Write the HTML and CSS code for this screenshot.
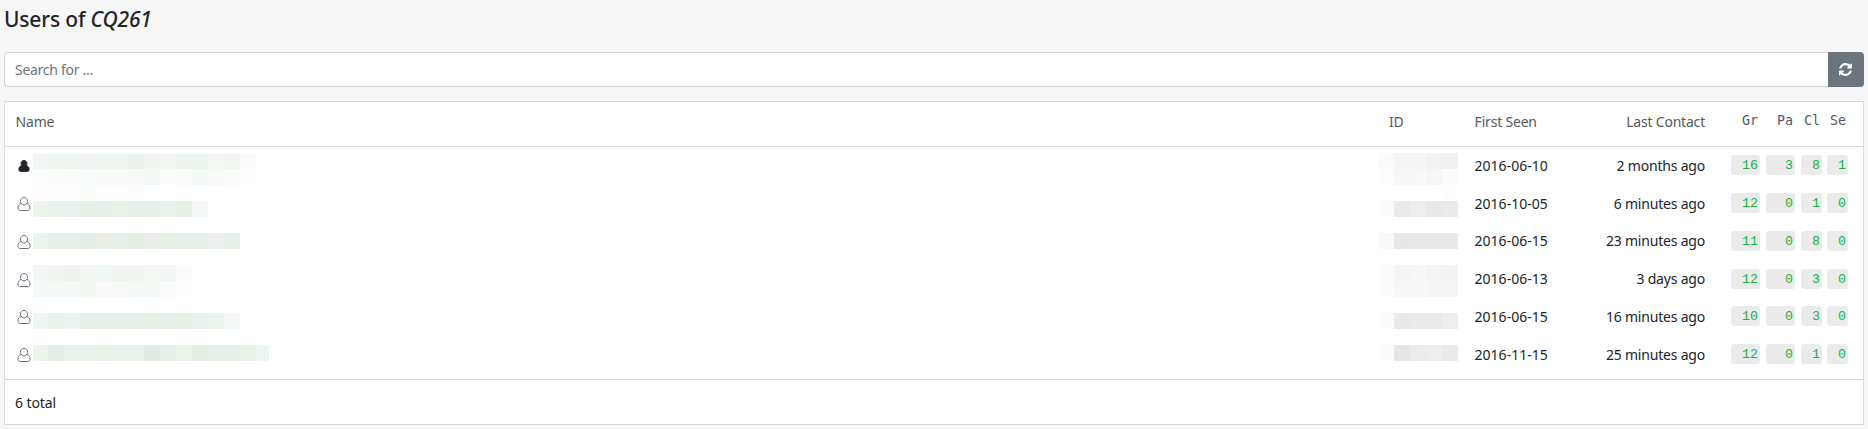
FILE: index.html
```html
<!DOCTYPE html>
<html lang="en">
<head>
<meta charset="utf-8">
<title>Users of CQ261</title>
<link rel="stylesheet" href="styles.css">
</head>
<body>
<svg class="defs" aria-hidden="true">
<symbol id="user" viewBox="0 0 14 16"><path d="M7 1.500C4.800 1.500 3.500 3.100 3.500 5.100C3.500 6.500 4 7.500 4.900 8.100C5.500 8.600 6.200 8.900 7 8.900S8.500 8.600 9.100 8.100C10 7.500 10.500 6.500 10.500 5.100C10.500 3.100 9.200 1.500 7 1.500M4.200 7.600C2 7.800 1 9.600 1 12.200C1 13.600 1.800 14.500 3.100 14.500H10.900C12.200 14.500 13 13.600 13 12.200C13 9.600 12 7.800 9.800 7.600"/></symbol>
</svg>
<h1 class="title">Users of <em>CQ261</em></h1>
<div class="search">
<input class="search-input" type="text" placeholder="Search for ...">
<button class="refresh" aria-label="Refresh"><svg width="13" height="13" viewBox="0 0 1536 1536"><path fill="#fff" d="M1511 928q0 5-1 7-64 268-268 434.500T764 1536q-146 0-282.500-55T238 1324l-129 129q-19 19-45 19t-45-19-19-45V960q0-26 19-45t45-19h448q26 0 45 19t19 45-19 45l-137 137q71 66 161 102t187 36q134 0 250-65t186-179q11-17 53-117 8-23 30-23h192q13 0 22.500 9.500t9.500 22.500zm25-800v448q0 26-19 45t-45 19h-448q-26 0-45-19t-19-45 19-45l138-138Q969 256 768 256q-134 0-250 65T332 500q-11 17-53 117-8 23-30 23H50q-13 0-22.500-9.500T18 608v-7q65-268 270-434.500T768 0q146 0 284 55.500T1297 212l130-129q19-19 45-19t45 19 19 45z"/></svg></button>
</div>
<div class="table">
<div class="row head"><span class="name">Name</span><span class="id">ID</span><span class="first">First Seen</span><span class="last">Last Contact</span><span class="counts"><b>Gr</b><b>Pa</b><b>Cl</b><b>Se</b></span></div>
<div class="body" id="body"></div>
<div class="foot">6 total</div>
</div>
<script src="app.js"></script>
</body>
</html>
```
FILE: styles.css
```css
*{box-sizing:border-box}
body{margin:0;padding:0 4px;background:#f7f7f7;color:#212529;font:14px/21px "Noto Sans",sans-serif}
.defs{display:none}
.title{margin:0;height:52px;padding-top:7px;font-size:21px;line-height:25px;font-weight:500;letter-spacing:-.17px}
.search{display:flex;height:35px;margin-bottom:14px}
.search-input{flex:1;min-width:0;border:1px solid #ced4da;border-right:0;border-radius:4px 0 0 4px;background:#fff;padding:0 10px;font:inherit;letter-spacing:-.28px}
.search-input::placeholder{color:#6c757d;opacity:1}
.refresh{width:36px;padding:0 1px 0 0;border:0;border-radius:0 4px 4px 0;background:#6c757d;display:flex;align-items:center;justify-content:center}
.table{height:324px;border:1px solid #d9dadb;background:#fff}
.row{display:grid;grid-template-columns:1374px 85px 120px 111px 1fr;padding-left:10px;align-items:center}
.head{height:45px;padding-bottom:6px;color:#55595e;border-bottom:1px solid #d9dadb;letter-spacing:-.2px}
.head .name,.first{padding-left:.600px}
.last{text-align:right;letter-spacing:-.2px}
.counts{display:flex;padding-left:26px;font:13.330px/22px "Liberation Mono",monospace;letter-spacing:0}
.counts b{font-weight:400;text-align:right;padding-right:2px;height:20px;border-radius:3px}
.counts b:nth-child(1){width:29px;margin-right:6px}
.counts b:nth-child(2){width:29px;margin-right:6px}
.counts b:nth-child(3){width:21px;margin-right:5px}
.counts b:nth-child(4){width:21px}
.head .counts{font:13.330px/20px "DejaVu Sans Mono",monospace;padding-bottom:1px}
.body{display:grid;grid-template-columns:1fr;grid-template-rows:repeat(6,37.800px);height:233px;border-bottom:1px solid #d9dadb}
.body .row{grid-column:1;padding-bottom:1.400px}
.body .counts b{background:#ebebeb;color:#1bb244}
.mosaic{grid-column:1;grid-row:1/7;display:block}
.user{display:block;width:14px;height:16px;margin:2px 0 0 2px;fill:none;stroke:#6c757d}
.user.self{width:12px;height:14px;margin-left:3px;fill:#212529;stroke:#212529}
.foot{height:45px;padding:12px 10px 0;letter-spacing:-.1px}
```
FILE: app.js
```javascript
const users = [
  ["2016-06-10", "2 months ago", [16, 3, 8, 1]],
  ["2016-10-05", "6 minutes ago", [12, 0, 1, 0]],
  ["2016-06-15", "23 minutes ago", [11, 0, 8, 0]],
  ["2016-06-13", "3 days ago", [12, 0, 3, 0]],
  ["2016-06-15", "16 minutes ago", [10, 0, 3, 0]],
  ["2016-11-15", "25 minutes ago", [12, 0, 1, 0]]
];
// Redacted names and ids: [x, y, block colours]
const masks = [
  [28, 7, "f2f7f4 eff5f1 eef4f0 f1f5f2 eff5f1 eff5f1 eaf2eb f0f5ef f3f7f4 ecf4ed ebf5ee f3f8f5 f1f6f2 fafbfb"],
  [28, 22, "fcfdfc fafdfa fafcfa fafcfc f9fbf9 f9fbf9 f8fbf8 f3f8f5 fbfdfa f9fcf9 f5faf7 f9fbf9 fafcfa fefefe"],
  [28, 38, "fefefe fefefe fefefe fbfdfa fefefe fefefe fdfdfd"],
  [28, 54, "ebf3eb ebf2eb ebf2ee e6f0e7 e6f0e8 e9f1e9 e6f0e8 e7f1e9 ebf2eb e8f1e8 f4f8f6"],
  [28, 86, "ebf3ed e7f1e9 e7f1e9 e5efe7 eaf0e8 e8f1e9 e5efe6 eaf0e9 e6f0e7 e6f0e8 e8efe8 edf1ee e7f1e9"],
  [28, 118, "f1f6f3 f0f5f2 eef3ed f1f6f3 f0f6f3 f0f5f0 f0f5f0 f3f8f5 f2f7f4 fafcfb"],
  [28, 134, "f4f9f6 f4f9f6 f4f9f5 f3f7f1 f8f9f8 f8f9f8 f5f9f6 f6faf7 fafcfc fdfdfd"],
  [28, 166, "eff5f2 ebf2eb edf3ee e7f0e8 e8f1e9 e8f1e9 e6f0e8 e9f0e8 e7f0e8 e9f0e8 e9f2ed ebf3ec f4f9f6"],
  [28, 198, "ebf3eb e5efe7 eaf2eb eaf2eb ebf2ea eaf2eb e9f2eb e2ebe4 e8f1e9 ebf3ea e5eee5 e8f1e9 e8f1e9 eaf2e9 edf5f0"],
  [1374, 6, "fbfbfb f5f5f5 f5f5f5 f2f2f2 f1f1f1"],
  [1374, 22, "fdfdfd f8f8f8 f9f9f9 f6f6f6 fcfcfc"],
  [1437, 38, "fdfdfd"],
  [1374, 54, "fcfcfa ebebeb eeeeee e9e9e9 ebebea"],
  [1374, 86, "f9f9f9 e8e8e8 e8e9e9 e8e9ea e9e9e9"],
  [1374, 118, "fcfcfc f5f5f5 f7f7f7 f4f4f4 f3f3f3"],
  [1374, 134, "fcfcfc f8f8f8 f7f7f7 f4f5f7 f5f5f5"],
  [1374, 166, "fcfcfb e9e9e9 ebebeb eaeaec eeeeee"],
  [1374, 198, "fcfcfb e6e6e6 ebedeb eeeeee ebebeb"]
];
const cells = masks.map(([x, y, colours]) => colours.split(" ").map((c, i) =>
  `<rect x="${x + i * 16 - (i ? 1 : 0)}" y="${y}" width="${i === 14 ? 13 : i ? 16 : 15}" height="16" fill="#${c}"/>`).join("")).join("");
document.getElementById("body").innerHTML =
  `<svg class="mosaic" width="1855" height="226" shape-rendering="crispEdges">${cells}</svg>` +
  users.map(([first, last, counts], i) =>
  `<div class="row" style="grid-row:${i + 1}"><span class="name"><svg class="user${i ? "" : " self"}"><use href="#user"/></svg></span><span></span><span class="first">${first}</span><span class="last">${last}</span><span class="counts">${counts.map(n => `<b>${n}</b>`).join("")}</span></div>`).join("");
```
